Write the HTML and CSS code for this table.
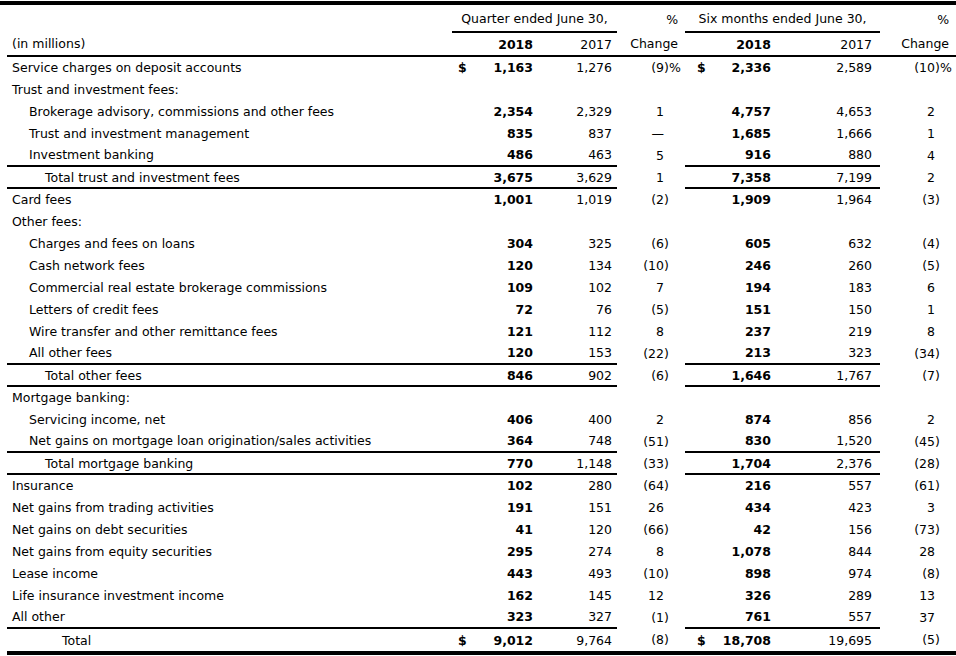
FILE: index.html
```html
<!DOCTYPE html>
<html>
<head>
<meta charset="utf-8">
<link rel="stylesheet" href="styles.css">
</head>
<body>
<div class="page">
  <div class="topline"></div>
  <table class="fin">
    <colgroup>
      <col class="c-lbl"><col class="c-d"><col class="c-q18"><col class="c-q17"><col class="c-cn"><col class="c-cs">
      <col class="c-d2"><col class="c-s18"><col class="c-s17"><col class="c-cn2"><col class="c-cs2">
    </colgroup>
    <thead>
      <tr class="h1">
        <th class="lbl"></th>
        <th colspan="3" class="grp">Quarter ended June 30,</th>
        <th colspan="2" class="pct">%</th>
        <th colspan="3" class="grp">Six months ended June 30,</th>
        <th colspan="2" class="pct">%</th>
      </tr>
      <tr class="h2">
        <th class="lbl">(in millions)</th>
        <th></th>
        <th class="n18 b">2018</th>
        <th class="n17">2017</th>
        <th colspan="2" class="pct">Change</th>
        <th></th>
        <th class="s18 b">2018</th>
        <th class="s17">2017</th>
        <th colspan="2" class="pct">Change</th>
      </tr>
    </thead>
    <tbody>
      <tr><td class="lbl">Service charges on deposit accounts</td><td class="d">$</td><td class="n18">1,163</td><td class="n17">1,276</td><td class="cn">(9</td><td class="cs">)%</td><td class="d2">$</td><td class="s18">2,336</td><td class="s17">2,589</td><td class="cn2">(10</td><td class="cs2">)%</td></tr>
      <tr><td class="lbl">Trust and investment fees:</td><td class="d"></td><td class="n18"></td><td class="n17"></td><td class="cn"></td><td class="cs"></td><td class="d2"></td><td class="s18"></td><td class="s17"></td><td class="cn2"></td><td class="cs2"></td></tr>
      <tr><td class="lbl i1">Brokerage advisory, commissions and other fees</td><td class="d"></td><td class="n18">2,354</td><td class="n17">2,329</td><td class="cn">1</td><td class="cs"></td><td class="d2"></td><td class="s18">4,757</td><td class="s17">4,653</td><td class="cn2">2</td><td class="cs2"></td></tr>
      <tr><td class="lbl i1">Trust and investment management</td><td class="d"></td><td class="n18">835</td><td class="n17">837</td><td class="cn">—</td><td class="cs"></td><td class="d2"></td><td class="s18">1,685</td><td class="s17">1,666</td><td class="cn2">1</td><td class="cs2"></td></tr>
      <tr class="sub"><td class="lbl i1">Investment banking</td><td class="d"></td><td class="n18">486</td><td class="n17">463</td><td class="cn">5</td><td class="cs"></td><td class="d2"></td><td class="s18">916</td><td class="s17">880</td><td class="cn2">4</td><td class="cs2"></td></tr>
      <tr class="sub"><td class="lbl i2">Total trust and investment fees</td><td class="d"></td><td class="n18">3,675</td><td class="n17">3,629</td><td class="cn">1</td><td class="cs"></td><td class="d2"></td><td class="s18">7,358</td><td class="s17">7,199</td><td class="cn2">2</td><td class="cs2"></td></tr>
      <tr><td class="lbl">Card fees</td><td class="d"></td><td class="n18">1,001</td><td class="n17">1,019</td><td class="cn">(2</td><td class="cs">)</td><td class="d2"></td><td class="s18">1,909</td><td class="s17">1,964</td><td class="cn2">(3</td><td class="cs2">)</td></tr>
      <tr><td class="lbl">Other fees:</td><td class="d"></td><td class="n18"></td><td class="n17"></td><td class="cn"></td><td class="cs"></td><td class="d2"></td><td class="s18"></td><td class="s17"></td><td class="cn2"></td><td class="cs2"></td></tr>
      <tr><td class="lbl i1">Charges and fees on loans</td><td class="d"></td><td class="n18">304</td><td class="n17">325</td><td class="cn">(6</td><td class="cs">)</td><td class="d2"></td><td class="s18">605</td><td class="s17">632</td><td class="cn2">(4</td><td class="cs2">)</td></tr>
      <tr><td class="lbl i1">Cash network fees</td><td class="d"></td><td class="n18">120</td><td class="n17">134</td><td class="cn">(10</td><td class="cs">)</td><td class="d2"></td><td class="s18">246</td><td class="s17">260</td><td class="cn2">(5</td><td class="cs2">)</td></tr>
      <tr><td class="lbl i1">Commercial real estate brokerage commissions</td><td class="d"></td><td class="n18">109</td><td class="n17">102</td><td class="cn">7</td><td class="cs"></td><td class="d2"></td><td class="s18">194</td><td class="s17">183</td><td class="cn2">6</td><td class="cs2"></td></tr>
      <tr><td class="lbl i1">Letters of credit fees</td><td class="d"></td><td class="n18">72</td><td class="n17">76</td><td class="cn">(5</td><td class="cs">)</td><td class="d2"></td><td class="s18">151</td><td class="s17">150</td><td class="cn2">1</td><td class="cs2"></td></tr>
      <tr><td class="lbl i1">Wire transfer and other remittance fees</td><td class="d"></td><td class="n18">121</td><td class="n17">112</td><td class="cn">8</td><td class="cs"></td><td class="d2"></td><td class="s18">237</td><td class="s17">219</td><td class="cn2">8</td><td class="cs2"></td></tr>
      <tr class="sub"><td class="lbl i1">All other fees</td><td class="d"></td><td class="n18">120</td><td class="n17">153</td><td class="cn">(22</td><td class="cs">)</td><td class="d2"></td><td class="s18">213</td><td class="s17">323</td><td class="cn2">(34</td><td class="cs2">)</td></tr>
      <tr class="sub"><td class="lbl i2">Total other fees</td><td class="d"></td><td class="n18">846</td><td class="n17">902</td><td class="cn">(6</td><td class="cs">)</td><td class="d2"></td><td class="s18">1,646</td><td class="s17">1,767</td><td class="cn2">(7</td><td class="cs2">)</td></tr>
      <tr><td class="lbl">Mortgage banking:</td><td class="d"></td><td class="n18"></td><td class="n17"></td><td class="cn"></td><td class="cs"></td><td class="d2"></td><td class="s18"></td><td class="s17"></td><td class="cn2"></td><td class="cs2"></td></tr>
      <tr><td class="lbl i1">Servicing income, net</td><td class="d"></td><td class="n18">406</td><td class="n17">400</td><td class="cn">2</td><td class="cs"></td><td class="d2"></td><td class="s18">874</td><td class="s17">856</td><td class="cn2">2</td><td class="cs2"></td></tr>
      <tr class="sub"><td class="lbl i1">Net gains on mortgage loan origination/sales activities</td><td class="d"></td><td class="n18">364</td><td class="n17">748</td><td class="cn">(51</td><td class="cs">)</td><td class="d2"></td><td class="s18">830</td><td class="s17">1,520</td><td class="cn2">(45</td><td class="cs2">)</td></tr>
      <tr class="sub"><td class="lbl i2">Total mortgage banking</td><td class="d"></td><td class="n18">770</td><td class="n17">1,148</td><td class="cn">(33</td><td class="cs">)</td><td class="d2"></td><td class="s18">1,704</td><td class="s17">2,376</td><td class="cn2">(28</td><td class="cs2">)</td></tr>
      <tr><td class="lbl">Insurance</td><td class="d"></td><td class="n18">102</td><td class="n17">280</td><td class="cn">(64</td><td class="cs">)</td><td class="d2"></td><td class="s18">216</td><td class="s17">557</td><td class="cn2">(61</td><td class="cs2">)</td></tr>
      <tr><td class="lbl">Net gains from trading activities</td><td class="d"></td><td class="n18">191</td><td class="n17">151</td><td class="cn">26</td><td class="cs"></td><td class="d2"></td><td class="s18">434</td><td class="s17">423</td><td class="cn2">3</td><td class="cs2"></td></tr>
      <tr><td class="lbl">Net gains on debt securities</td><td class="d"></td><td class="n18">41</td><td class="n17">120</td><td class="cn">(66</td><td class="cs">)</td><td class="d2"></td><td class="s18">42</td><td class="s17">156</td><td class="cn2">(73</td><td class="cs2">)</td></tr>
      <tr><td class="lbl">Net gains from equity securities</td><td class="d"></td><td class="n18">295</td><td class="n17">274</td><td class="cn">8</td><td class="cs"></td><td class="d2"></td><td class="s18">1,078</td><td class="s17">844</td><td class="cn2">28</td><td class="cs2"></td></tr>
      <tr><td class="lbl">Lease income</td><td class="d"></td><td class="n18">443</td><td class="n17">493</td><td class="cn">(10</td><td class="cs">)</td><td class="d2"></td><td class="s18">898</td><td class="s17">974</td><td class="cn2">(8</td><td class="cs2">)</td></tr>
      <tr><td class="lbl">Life insurance investment income</td><td class="d"></td><td class="n18">162</td><td class="n17">145</td><td class="cn">12</td><td class="cs"></td><td class="d2"></td><td class="s18">326</td><td class="s17">289</td><td class="cn2">13</td><td class="cs2"></td></tr>
      <tr class="sub"><td class="lbl">All other</td><td class="d"></td><td class="n18">323</td><td class="n17">327</td><td class="cn">(1</td><td class="cs">)</td><td class="d2"></td><td class="s18">761</td><td class="s17">557</td><td class="cn2">37</td><td class="cs2"></td></tr>
      <tr class="total"><td class="lbl i3">Total</td><td class="d">$</td><td class="n18">9,012</td><td class="n17">9,764</td><td class="cn">(8</td><td class="cs">)</td><td class="d2">$</td><td class="s18">18,708</td><td class="s17">19,695</td><td class="cn2">(5</td><td class="cs2">)</td></tr>
    </tbody>
  </table>
</div>
</body>
</html>
```
FILE: styles.css
```css
html, body {
  margin: 0;
  padding: 0;
  background: #ffffff;
}
.page {
  width: 956px;
  padding-top: 1px;
  font-family: "DejaVu Sans", Verdana, sans-serif;
  font-size: 12.5px;
  color: #000;
}
.topline {
  border-top: 4px solid #000;
}
.fin {
  margin-left: 7px;
  width: 949px;
  table-layout: fixed;
  border-collapse: collapse;
}
.c-lbl { width: 445px; }
.c-d { width: 20px; }
.c-q18 { width: 66px; }
.c-q17 { width: 79px; }
.c-cn { width: 47px; }
.c-cs { width: 21px; }
.c-d2 { width: 22px; }
.c-s18 { width: 69px; }
.c-s17 { width: 104px; }
.c-cn2 { width: 55px; }
.c-cs2 { width: 21px; }

.fin th, .fin td {
  padding: 0;
  font-weight: normal;
  white-space: nowrap;
  vertical-align: middle;
  line-height: 15px;
}
.fin th.b { font-weight: bold; }
.h1 th {
  height: 21px;
  vertical-align: bottom;
  padding-bottom: 5px;
}
.h2 th { height: 22px; }
.h2 th { border-bottom: 2px solid #000; }
.h1 th.grp {
  text-align: center;
  border-bottom: 2px solid #000;
}
.fin th.pct {
  text-align: right;
  padding-right: 7px;
}
.fin th.lbl { text-align: left; padding-left: 5px; }

.fin tbody tr { height: 22px; }
.fin tbody tr.total { height: 25px; }
.lbl { text-align: left; }
.fin td.lbl { padding-left: 5px; }
.fin td.i1 { padding-left: 22px; }
.fin td.i2 { padding-left: 38px; }
.fin td.i3 { padding-left: 55px; }

.fin td.d { text-align: left; padding-left: 6px; font-weight: bold; }
.fin td.d2 { text-align: left; padding-left: 12px; font-weight: bold; }
.fin .n18, .fin .s18 { text-align: right; padding-right: 5px; }
.fin td.n18, .fin td.s18 { font-weight: bold; }
.fin .n17 { text-align: right; padding-right: 5px; }
.fin .s17 { text-align: right; padding-right: 8px; }
.cn, .cn2 { text-align: right; }
.cs, .cs2 { text-align: left; }

.sub td.lbl, .sub td.d, .sub td.n18, .sub td.n17,
.sub td.d2, .sub td.s18, .sub td.s17 {
  border-bottom: 2px solid #000;
}
.fin .total td { border-bottom: 4px solid #000; }
```
